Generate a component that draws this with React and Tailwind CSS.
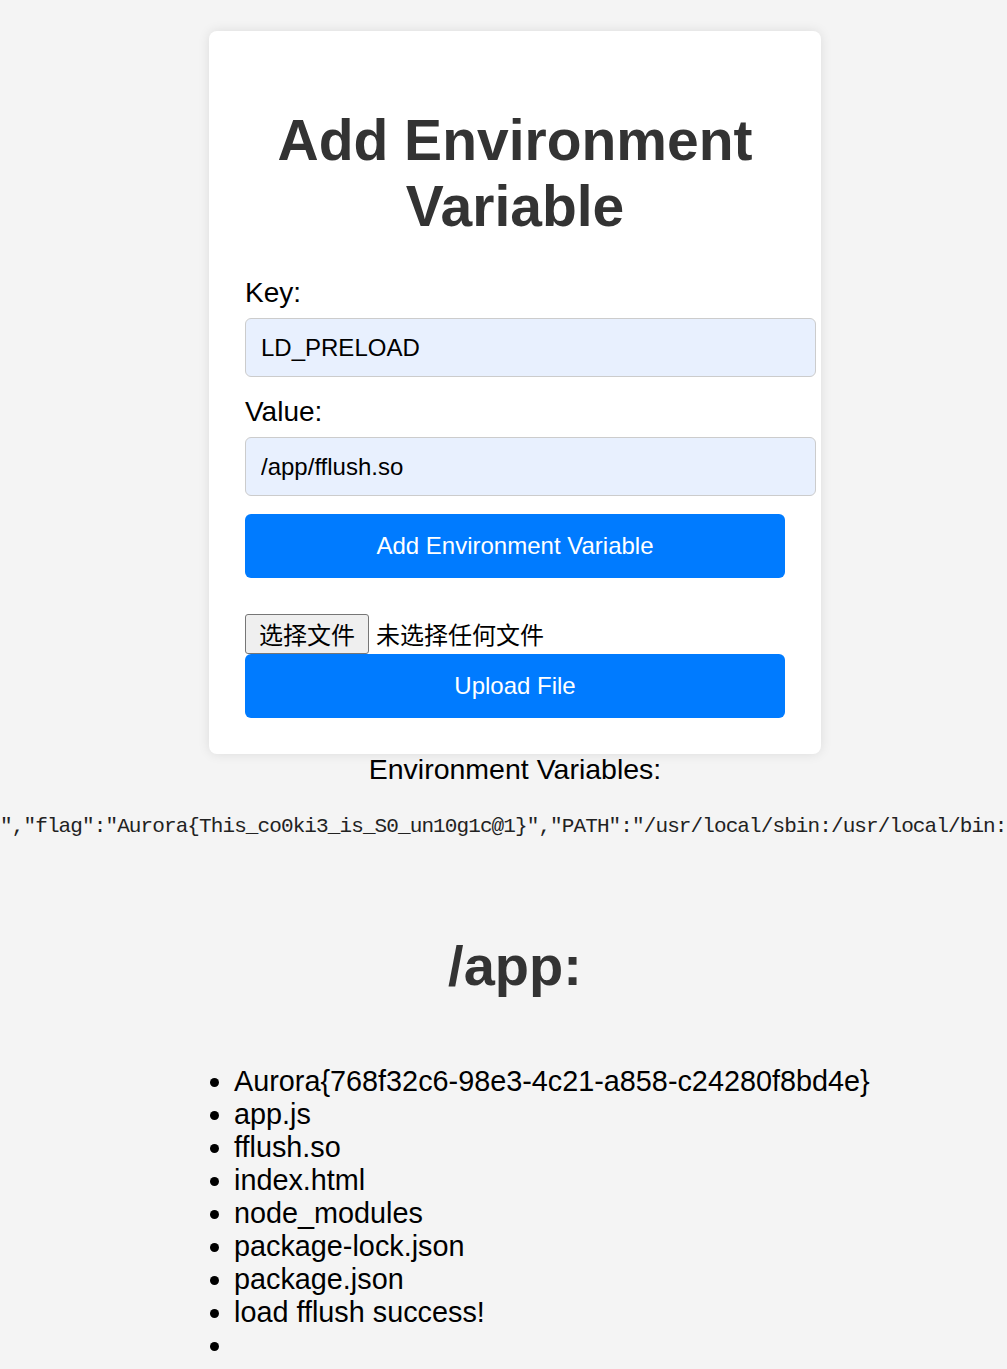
import React from "react";

const files = [
  "Aurora{768f32c6-98e3-4c21-a858-c24280f8bd4e}",
  "app.js",
  "fflush.so",
  "index.html",
  "node_modules",
  "package-lock.json",
  "package.json",
  "load fflush success!",
  "",
];

const envLine =
  '{"HOSTNAME":"8f3a1c2b7d9e4f","HOME":"/root","flag":"Aurora{This_co0ki3_is_S0_un10g1c@1}","PATH":"/usr/local/sbin:/usr/local/bin:/usr/sbin:/usr/bin:/sbin:/bin","PWD":"/app"}';

const App = () => {
  return (
    <div className="min-h-screen w-full overflow-hidden bg-[#f4f4f4] font-['Liberation_Sans','Noto_Sans_CJK_SC',sans-serif] text-black">
      <div className="w-[1030px] flex flex-col items-center pt-[31px]">
        {/* Form card */}
        <div className="w-[612px] bg-white rounded-lg shadow-[0_0_12px_rgba(0,0,0,0.1)] px-[36px] pt-[76px] pb-[36px]">
          <h1 className="text-center text-[57px] leading-[66px] font-bold text-[#333]">
            Add Environment
            <br />
            Variable
          </h1>

          <label className="block mt-[38px] text-[28px] leading-[32px]">Key:</label>
          <input
            readOnly
            value="LD_PRELOAD"
            className="block mt-[9px] w-[571px] h-[59px] px-[15px] bg-[#e8f0fe] border border-[#ccc] rounded-[6px] text-[24px] outline-none"
          />

          <label className="block mt-[19px] text-[28px] leading-[32px]">Value:</label>
          <input
            readOnly
            value="/app/fflush.so"
            className="block mt-[9px] w-[571px] h-[59px] px-[15px] bg-[#e8f0fe] border border-[#ccc] rounded-[6px] text-[24px] outline-none"
          />

          <button className="block mt-[18px] w-[540px] h-[64px] bg-[#007bff] text-white text-[24px] rounded-[6px]">
            Add Environment Variable
          </button>

          {/* file picker */}
          <div className="mt-[36px] flex items-center h-[40px] text-[24px]">
            <span className="h-[40px] w-[124px] flex items-center justify-center pt-[3px] bg-[#efefef] border border-[#767676] rounded-[3px]">
              选择文件
            </span>
            <span className="ml-[7px] pt-[3px]">未选择任何文件</span>
          </div>
          <button className="block w-[540px] h-[64px] bg-[#007bff] text-white text-[24px] rounded-[6px]">
            Upload File
          </button>
        </div>

        <p className="-mt-[1px] text-[28.5px] leading-[32px]">Environment Variables:</p>
      </div>

      {/* env dump, centered and overflowing */}
      <div className="w-[1030px] flex justify-center mt-[30px]">
        <pre className="whitespace-pre font-['Liberation_Mono',monospace] text-[21px] leading-[24px] tracking-[-0.9px] text-[#222]">
          {envLine}
        </pre>
      </div>

      <div className="w-[1030px]">
        <h1 className="mt-[95px] text-center text-[56px] leading-[64px] font-bold text-[#333]">/app:</h1>
        <ul className="mt-[67px] pl-[234px] list-disc text-[28.8px] leading-[33px]">
          {files.map((f, i) => (
            <li key={i}>{f || "\u00a0"}</li>
          ))}
        </ul>
      </div>
    </div>
  );
};

export default App;
